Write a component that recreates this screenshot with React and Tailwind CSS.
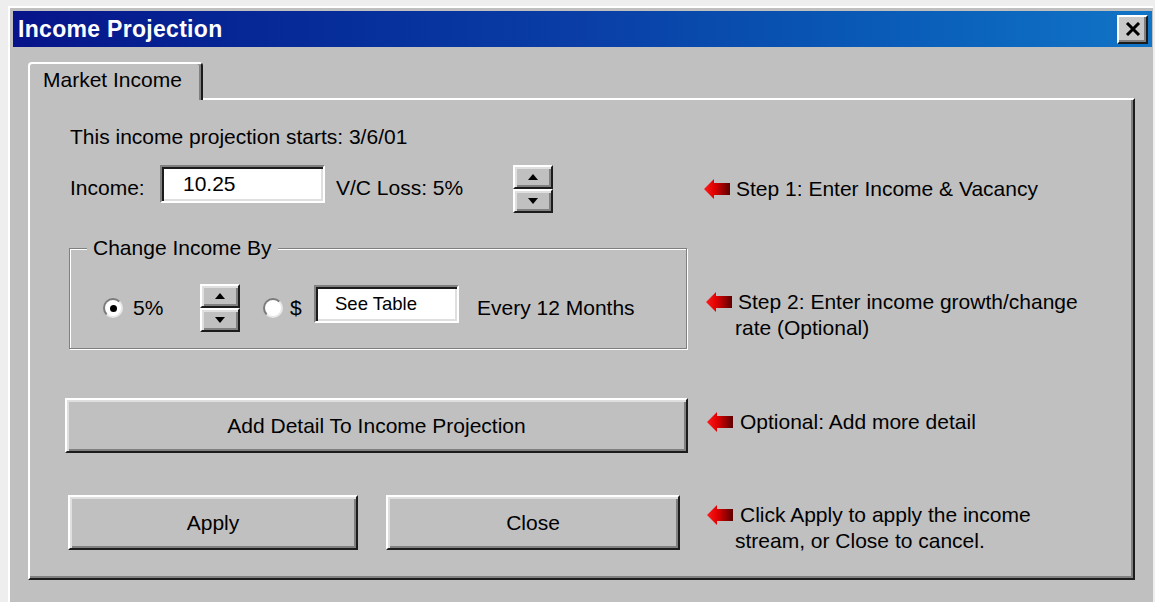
import React from 'react'

// classic raised / sunken bevels
const raised = 'border-2 border-t-white border-l-white border-r-[#1c1c1c] border-b-[#1c1c1c] shadow-[inset_2px_2px_0_#dfdfdf,inset_-2px_-2px_0_#808080]'
const sunken = 'border-2 border-t-[#808080] border-l-[#808080] border-r-white border-b-white shadow-[inset_2px_2px_0_#1c1c1c,inset_-2px_-2px_0_#dfdfdf]'

const RedArrow = () => (
  <svg width="28" height="22" viewBox="0 0 28 22" className="shrink-0">
    <defs>
      <linearGradient id="redArrowFill" x1="0" x2="1" y1="0" y2="0">
        <stop offset="0" stopColor="#ff1a1a" />
        <stop offset="0.42" stopColor="#dd0000" />
        <stop offset="1" stopColor="#5c0000" />
      </linearGradient>
    </defs>
    <path d="M1 11 L11 1 L11 5 L27 5 L27 17 L11 17 L11 21 Z" fill="url(#redArrowFill)" />
  </svg>
)

const Note = ({ lines, gap = 'gap-[5px]', indent = 'pl-[30px]' }) => (
  <div className="flex flex-col leading-[26px]">
    <div className={`flex items-center ${gap}`}>
      <RedArrow />
      <span className="whitespace-nowrap">{lines[0]}</span>
    </div>
    {lines[1] && <div className={`${indent} whitespace-nowrap`}>{lines[1]}</div>}
  </div>
)

const Spinner = () => (
  <div className="flex flex-col w-[40px] h-[48px] shrink-0">
    <div className={`h-[24px] flex items-center justify-center bg-[#c0c0c0] ${raised}`}>
      <svg width="10" height="6" viewBox="0 0 10 6"><path d="M0 6 L5 0 L10 6 Z" fill="#000" /></svg>
    </div>
    <div className={`h-[24px] flex items-center justify-center bg-[#c0c0c0] ${raised}`}>
      <svg width="10" height="6" viewBox="0 0 10 6"><path d="M0 0 L10 0 L5 6 Z" fill="#000" /></svg>
    </div>
  </div>
)

const Radio = ({ checked }) => (
  <div className="w-[20px] h-[20px] shrink-0 rounded-full bg-white border-2 border-t-[#7a7a7a] border-l-[#7a7a7a] border-r-[#e8e8e8] border-b-[#e8e8e8] flex items-center justify-center">
    {checked && <div className="w-[7px] h-[7px] rounded-full bg-black" />}
  </div>
)

const Button = ({ children, cn }) => (
  <button className={`h-[55px] bg-[#c0c0c0] text-[21px] text-black ${raised} ${cn}`}>{children}</button>
)

export default function App() {
  return (
    <div className="w-[1155px] h-[602px] bg-[#eeeeee] overflow-hidden font-['Liberation_Sans',Arial,sans-serif] text-black">
      <div className="ml-[8px] mt-[6px] w-[1145px] h-[596px] bg-[#c0c0c0] border-l-2 border-t-2 border-white pl-[3px] pt-[3px]">

        {/* title bar */}
        <div className="w-[1139px] h-[36px] flex items-center justify-between bg-linear-to-r from-[#07138a] via-[#0a3ea6] to-[#1174c6]">
          <span className="pl-[5px] text-white font-bold text-[23px] tracking-[0.3px]">Income Projection</span>
          <div className="mr-[4px] w-[31px] h-[29px] flex items-center justify-center bg-[#c8c8c8] border-2 border-t-white border-l-white border-r-[#1c1c1c] border-b-[#1c1c1c] shadow-[inset_-2px_-2px_0_#808080]">
            <svg width="16" height="14" viewBox="0 0 16 14">
              <path d="M2 1 L14 13 M14 1 L2 13" stroke="#000" strokeWidth="3" />
            </svg>
          </div>
        </div>

        {/* tab */}
        <div className="ml-[15px] mt-[15px] relative z-10 -mb-[2px] w-[175px] h-[38px] flex items-center pl-[13px] pb-[4px] bg-[#c0c0c0] border-t-2 border-l-2 border-t-white border-l-white border-r-2 border-r-[#1c1c1c] rounded-t-[4px] shadow-[inset_-2px_0_0_#808080] text-[21px]">
          Market Income
        </div>

        {/* tab page */}
        <div className="ml-[15px] w-[1107px] h-[482px] border-2 border-t-white border-l-white border-r-[#1c1c1c] border-b-[#1c1c1c] shadow-[inset_-2px_-2px_0_#808080] pl-[35px] text-[21px]">

          <div className="mt-[25px] h-[24px] leading-[24px] ml-[5px]">This income projection starts: 3/6/01</div>

          {/* income row */}
          <div className="mt-[16px] h-[48px] flex items-start">
            <div className="w-[638px] flex items-start">
              <div className="ml-[5px] w-[90px] h-[46px] flex items-center">Income:</div>
              <div className={`w-[165px] h-[38px] bg-white flex items-center pl-[21px] ${sunken}`}>10.25</div>
              <div className="ml-[11px] w-[177px] h-[46px] flex items-center">V/C Loss: 5%</div>
              <Spinner />
            </div>
            <div className="h-[48px] flex items-center">
              <Note lines={['Step 1: Enter Income & Vacancy']} />
            </div>
          </div>

          {/* change income group */}
          <div className="mt-[35px] flex items-start">
            <div className="w-[638px]">
              <div className="relative ml-[4px] w-[618px] h-[101px] border border-[#808080] shadow-[1px_1px_0_#fff,inset_1px_1px_0_#fff] pt-[35px]">
                <span className="absolute -top-[13px] left-[17px] px-[6px] leading-[24px] bg-[#c0c0c0]">Change Income By</span>
                <div className="h-[48px] flex items-center">
                  <div className="ml-[33px]"><Radio checked /></div>
                  <div className="ml-[10px] w-[67px]">5%</div>
                  <Spinner />
                  <div className="ml-[23px]"><Radio /></div>
                  <div className="ml-[7px] w-[24px]">$</div>
                  <div className={`w-[145px] h-[38px] bg-white flex items-center pl-[19px] text-[18.5px] -mt-[8px] ${sunken}`}>See Table</div>
                  <div className="ml-[18px] whitespace-nowrap">Every 12 Months</div>
                </div>
              </div>
            </div>
            <div className="mt-[41px] ml-[2px]">
              <Note lines={['Step 2: Enter income growth/change', 'rate (Optional)']} indent="pl-[30px]" />
            </div>
          </div>

          {/* detail button */}
          <div className="mt-[49px] flex items-start">
            <div className="w-[638px]">
              <Button cn="w-[623px]">Add Detail To Income Projection</Button>
            </div>
            <div className="mt-[11px] ml-[3px]">
              <Note lines={['Optional: Add more detail']} gap="gap-[6px]" />
            </div>
          </div>

          {/* apply / close */}
          <div className="mt-[42px] flex items-start">
            <div className="w-[638px] flex">
              <Button cn="ml-[3px] w-[290px]">Apply</Button>
              <Button cn="ml-[28px] w-[294px]">Close</Button>
            </div>
            <div className="mt-[7px] ml-[3px]">
              <Note lines={['Click Apply to apply the income', 'stream, or Close to cancel.']} gap="gap-[6px]" indent="pl-[29px]" />
            </div>
          </div>
        </div>
      </div>
    </div>
  )
}
